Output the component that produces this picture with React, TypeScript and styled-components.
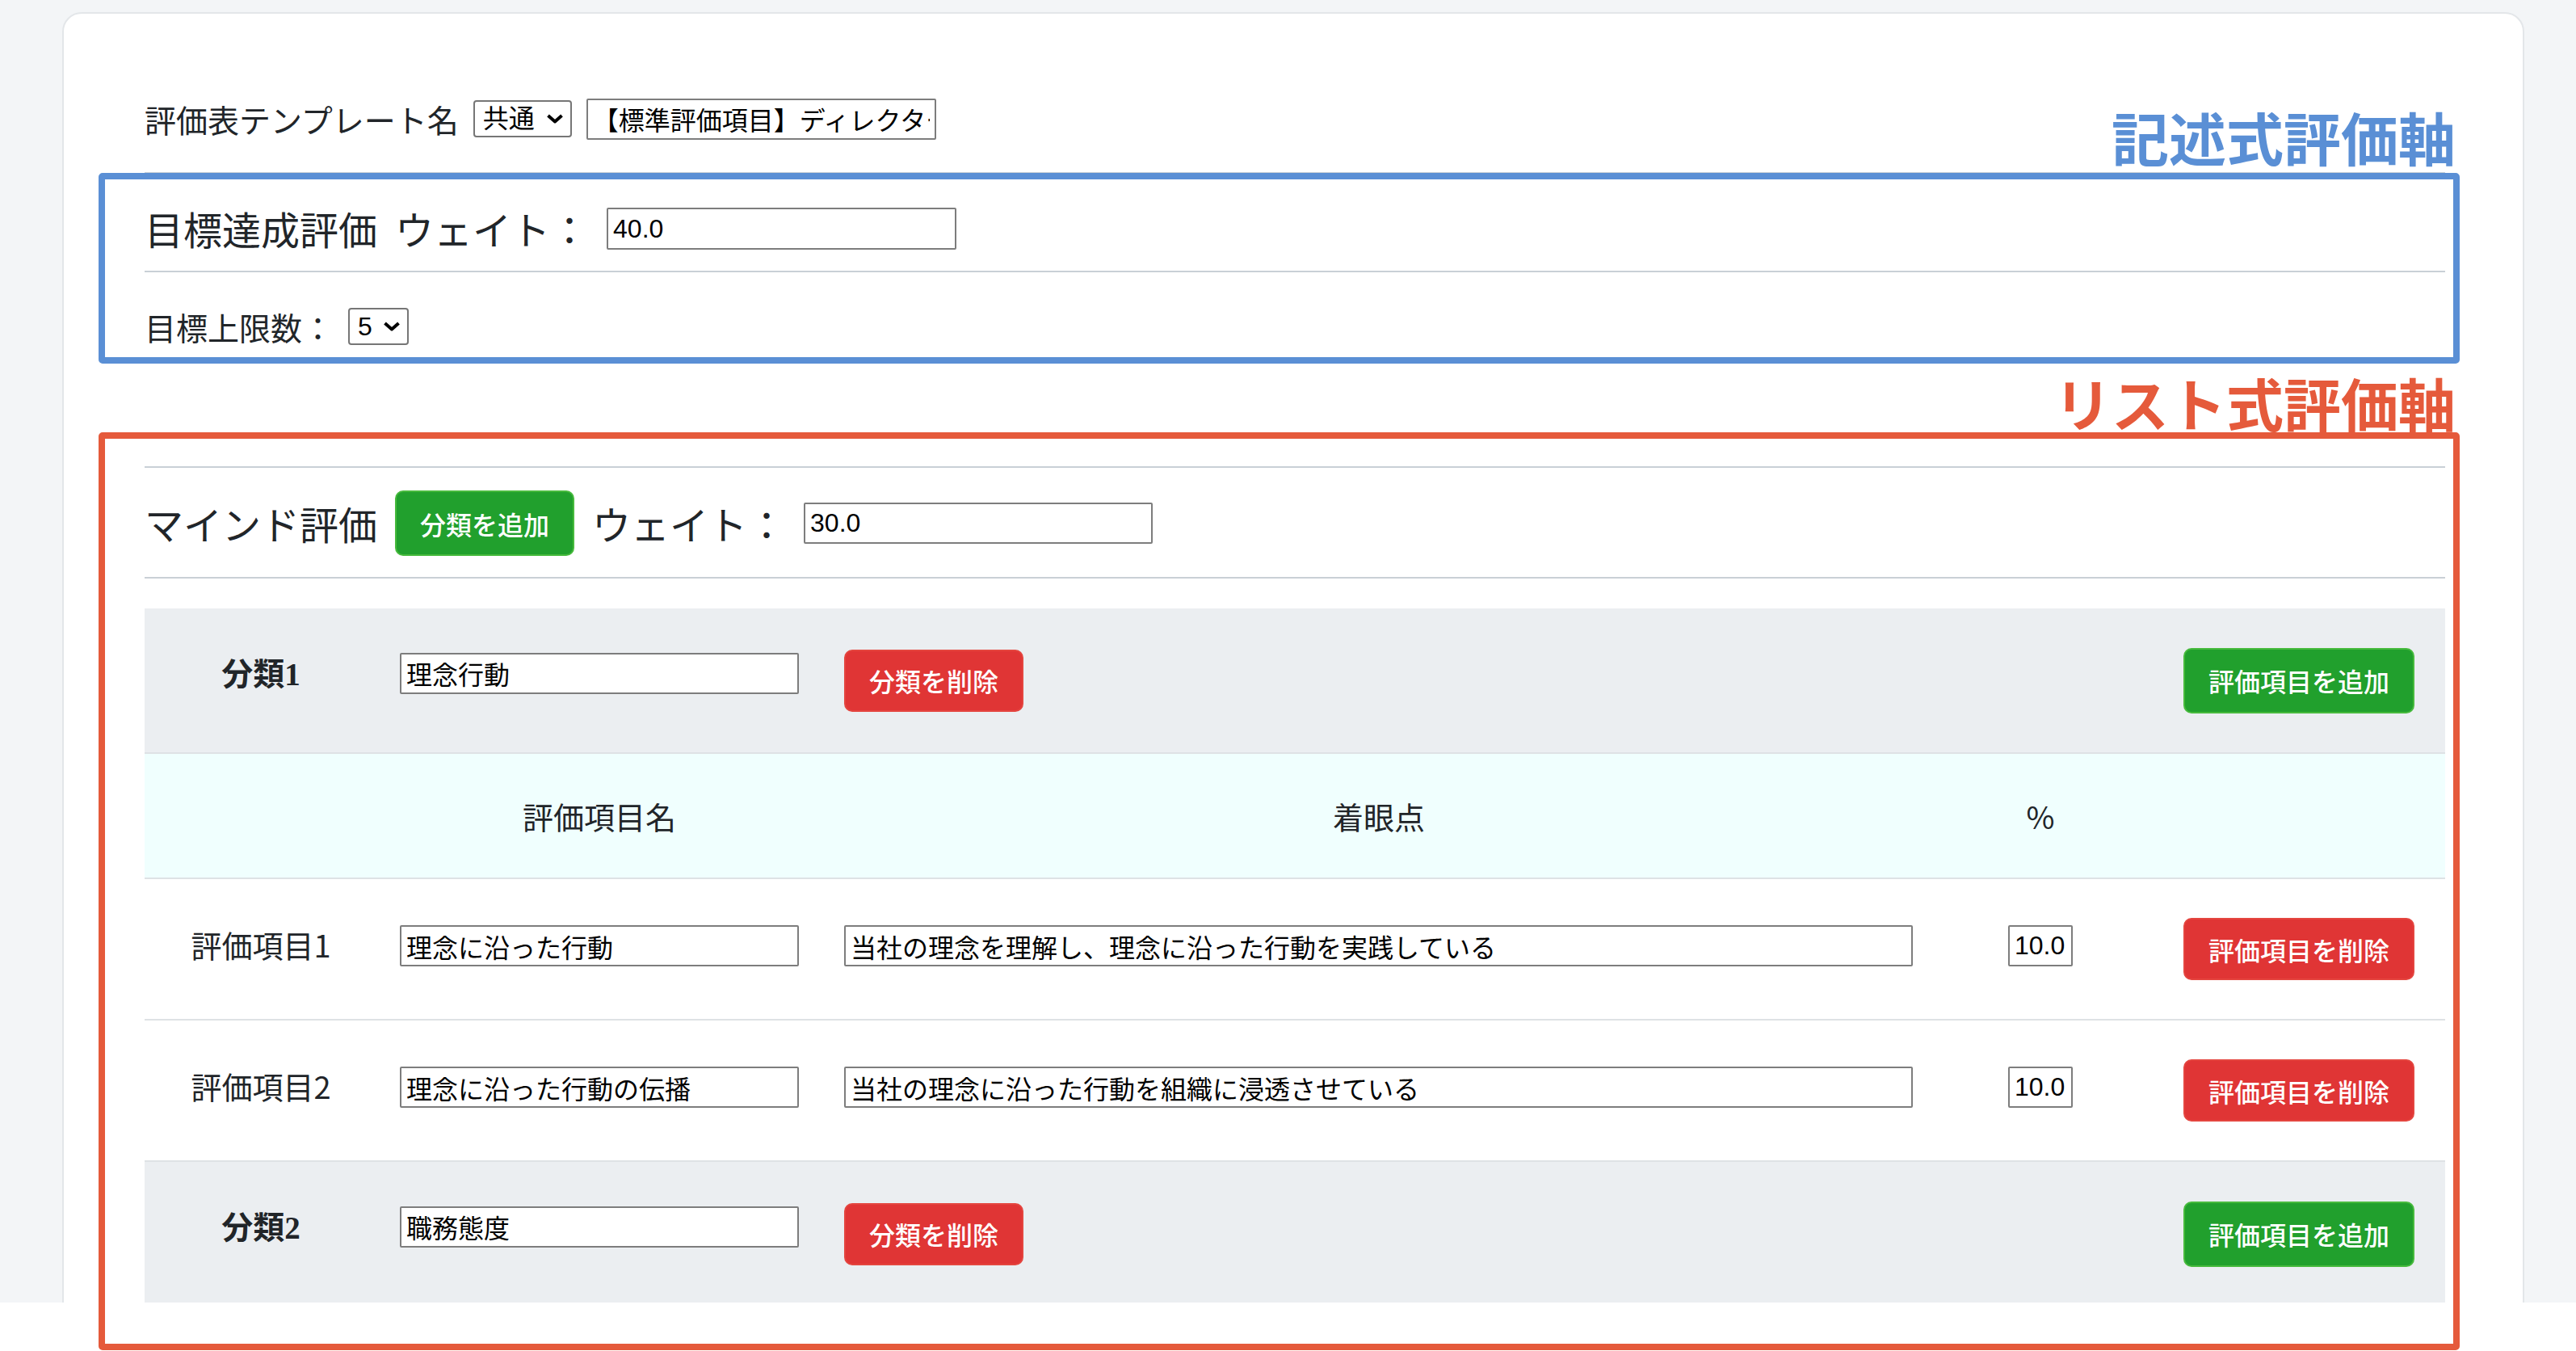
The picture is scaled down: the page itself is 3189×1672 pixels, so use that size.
import { ReactNode } from "react";
import styled, { createGlobalStyle } from "styled-components";

const GlobalStyle = createGlobalStyle`
  html, body {
    margin: 0;
    padding: 0;
    background: #ffffff;
  }

  body {
    font-family: "Noto Sans CJK JP", "Noto Sans", sans-serif;
    color: #212529;
  }

  * {
    box-sizing: border-box;
  }
`;

const BLUE = "#5a8fd5";
const RED = "#e55a3b";

const Canvas = styled.div`
  position: relative;
  width: 3189px;
  height: 1672px;
  overflow: hidden;
  background: #ffffff;
`;

const Viewport = styled.div`
  height: 1612px;
  overflow: hidden;
  background: #f3f5f7;
  padding: 15px 64px 0 77px;
`;

const Card = styled.main`
  min-height: 1700px;
  background: #ffffff;
  border: 2px solid #e3e6e9;
  border-radius: 24px;
  padding: 98px 96px 0 100px;
`;

const Line = styled.hr<{ $gap: number }>`
  margin: ${(p) => p.$gap}px 0 0;
  height: 2px;
  border: none;
  background: #c9d0d6;
`;

const FieldRow = styled.div<{ $top: number; $gap: number; $height: number; $size: number }>`
  display: flex;
  align-items: center;
  gap: ${(p) => p.$gap}px;
  height: ${(p) => p.$height}px;
  margin-top: ${(p) => p.$top}px;
  font-size: ${(p) => p.$size}px;
  line-height: 1.2;
  white-space: nowrap;
`;

const Label = styled.span`
  font-weight: 400;
`;

const Field = styled.input<{ $w: number; $h?: number; $lift?: number }>`
  width: ${(p) => p.$w}px;
  height: ${(p) => p.$h ?? 51}px;
  margin-top: ${(p) => -(p.$lift ?? 0)}px;
  padding: 0 6px;
  font: 32px "Liberation Sans", "Noto Sans CJK JP", sans-serif;
  color: #000000;
  background: #ffffff;
  border: 2px solid #7d7d7d;
  border-radius: 2px;
  outline: none;
`;

const SelectBox = styled.span<{ $w: number }>`
  position: relative;
  display: inline-flex;
  width: ${(p) => p.$w}px;
  height: 46px;
`;

const NativeSelect = styled.select`
  appearance: none;
  width: 100%;
  height: 100%;
  padding: 0 0 0 10px;
  font: 32px "Liberation Sans", "Noto Sans CJK JP", sans-serif;
  color: #000000;
  background: #ffffff;
  border: 2px solid #767676;
  border-radius: 4px;
`;

const Caret = styled.svg`
  position: absolute;
  right: 10px;
  top: 50%;
  transform: translateY(-50%);
  pointer-events: none;
`;

const ActionButton = styled.button<{ $tone: "add" | "remove" }>`
  height: ${(p) => (p.$tone === "add" ? 81 : 77)}px;
  padding: 0 29px;
  border-radius: 10px;
  border: 2px solid ${(p) => (p.$tone === "add" ? "#47ba3d" : "#e4453f")};
  background: ${(p) => (p.$tone === "add" ? "#21a02d" : "#e03535")};
  color: #ffffff;
  font: 500 32px "Noto Sans CJK JP", sans-serif;
  white-space: nowrap;
  cursor: pointer;
`;

const Table = styled.div`
  margin-top: 37px;
`;

const Row = styled.div<{ $kind: "category" | "head" | "item" }>`
  display: grid;
  grid-template-columns: 288px 550px 1380px 258px 1fr;
  height: ${(p) => (p.$kind === "category" ? 180 : p.$kind === "head" ? 155 : 175)}px;
  background: ${(p) =>
    p.$kind === "category" ? "#ebeef1" : p.$kind === "head" ? "#f0fffe" : "#ffffff"};
  border-bottom: 2px solid #dee2e5;
  font-size: 38px;
  line-height: 1.2;
`;

const Cell = styled.div<{ $align?: "start" | "center" | "end" }>`
  display: flex;
  align-items: center;
  justify-content: ${(p) =>
    p.$align === "center" ? "center" : p.$align === "end" ? "flex-end" : "flex-start"};
  padding: ${(p) => (p.$align === "end" ? "0 38px 0 0" : p.$align === "center" ? "0" : "0 0 0 28px")};
  white-space: nowrap;
`;

const ItemName = styled.span`
  margin-top: -12px;
`;

const CategoryName = styled.span`
  font-family: "Liberation Serif", "Noto Sans CJK JP", serif;
  font-weight: 700;
  font-size: 39px;
  margin-top: -14px;
`;

const Frame = styled.div<{ $top: number; $height: number; $color: string }>`
  position: absolute;
  left: 122px;
  top: ${(p) => p.$top}px;
  width: 2923px;
  height: ${(p) => p.$height}px;
  border: 8px solid ${(p) => p.$color};
  border-radius: 5px;
  pointer-events: none;
`;

const FrameTag = styled.div<{ $top: number; $color: string }>`
  position: absolute;
  right: 149px;
  top: ${(p) => p.$top}px;
  color: ${(p) => p.$color};
  font: 700 71px/1 "Noto Sans CJK JP", sans-serif;
  white-space: nowrap;
`;

function Select({ width, value }: { width: number; value: string }) {
  return (
    <SelectBox $w={width}>
      <NativeSelect defaultValue={value}>
        <option value={value}>{value}</option>
      </NativeSelect>
      <Caret width="22" height="13" viewBox="0 0 22 13">
        <path d="M2.5 2.5 L11 10 L19.5 2.5" fill="none" stroke="#000" strokeWidth="4" strokeLinejoin="round" />
      </Caret>
    </SelectBox>
  );
}

type Item = { name: string; focus: string; rate: string };
type Category = { title: string; name: string; items: Item[] };

const categories: Category[] = [
  {
    title: "分類1",
    name: "理念行動",
    items: [
      { name: "理念に沿った行動", focus: "当社の理念を理解し、理念に沿った行動を実践している", rate: "10.0" },
      { name: "理念に沿った行動の伝播", focus: "当社の理念に沿った行動を組織に浸透させている", rate: "10.0" },
    ],
  },
  { title: "分類2", name: "職務態度", items: [] },
];

function CategoryBlock({ category, withHead }: { category: Category; withHead: boolean }) {
  return (
    <>
      <Row $kind="category">
        <Cell $align="center">
          <CategoryName>{category.title}</CategoryName>
        </Cell>
        <Cell>
          <Field $w={494} $lift={18} defaultValue={category.name} />
        </Cell>
        <Cell>
          <ActionButton $tone="remove">分類を削除</ActionButton>
        </Cell>
        <Cell />
        <Cell $align="end">
          <ActionButton $tone="add">評価項目を追加</ActionButton>
        </Cell>
      </Row>
      {withHead && (
        <Row $kind="head">
          <Cell />
          <Cell $align="center">評価項目名</Cell>
          <Cell $align="center">着眼点</Cell>
          <Cell $align="center">%</Cell>
          <Cell />
        </Row>
      )}
      {category.items.map((item, i) => (
        <Row $kind="item" key={item.name}>
          <Cell $align="center">
            <ItemName>評価項目{i + 1}</ItemName>
          </Cell>
          <Cell>
            <Field $w={494} $lift={8} defaultValue={item.name} />
          </Cell>
          <Cell>
            <Field $w={1323} $lift={8} defaultValue={item.focus} />
          </Cell>
          <Cell $align="center">
            <Field $w={80} $lift={8} defaultValue={item.rate} />
          </Cell>
          <Cell $align="end">
            <ActionButton $tone="remove">評価項目を削除</ActionButton>
          </Cell>
        </Row>
      ))}
    </>
  );
}

function Section({ children }: { children: ReactNode }) {
  return <section>{children}</section>;
}

export default function App() {
  return (
    <>
      <GlobalStyle />
      <Canvas>
        <Viewport>
          <Card>
            <FieldRow $top={0} $gap={18} $height={64} $size={39}>
              <Label>評価表テンプレート名</Label>
              <Select width={122} value="共通" />
              <Field $w={433} defaultValue="【標準評価項目】ディレクター" />
            </FieldRow>
            <Line $gap={34} />

            <Section>
              <FieldRow $top={36} $gap={22} $height={64} $size={48}>
                <Label>目標達成評価</Label>
                <Label>ウェイト：</Label>
                <Field $w={433} $h={52} defaultValue="40.0" />
              </FieldRow>
              <Line $gap={20} />
              <FieldRow $top={36} $gap={18} $height={62} $size={39}>
                <Label>目標上限数：</Label>
                <Select width={75} value="5" />
              </FieldRow>
            </Section>

            <Line $gap={142} />
            <Section>
              <FieldRow $top={28} $gap={22} $height={81} $size={48}>
                <Label>マインド評価</Label>
                <ActionButton $tone="add">分類を追加</ActionButton>
                <Label>ウェイト：</Label>
                <Field $w={432} defaultValue="30.0" />
              </FieldRow>
              <Line $gap={26} />
              <Table>
                {categories.map((c, i) => (
                  <CategoryBlock key={c.title} category={c} withHead={i === 0} />
                ))}
              </Table>
            </Section>
          </Card>
        </Viewport>

        <FrameTag $top={133} $color={BLUE}>記述式評価軸</FrameTag>
        <Frame $top={214} $height={236} $color={BLUE} />
        <FrameTag $top={462} $color={RED}>リスト式評価軸</FrameTag>
        <Frame $top={535} $height={1136} $color={RED} />
      </Canvas>
    </>
  );
}
